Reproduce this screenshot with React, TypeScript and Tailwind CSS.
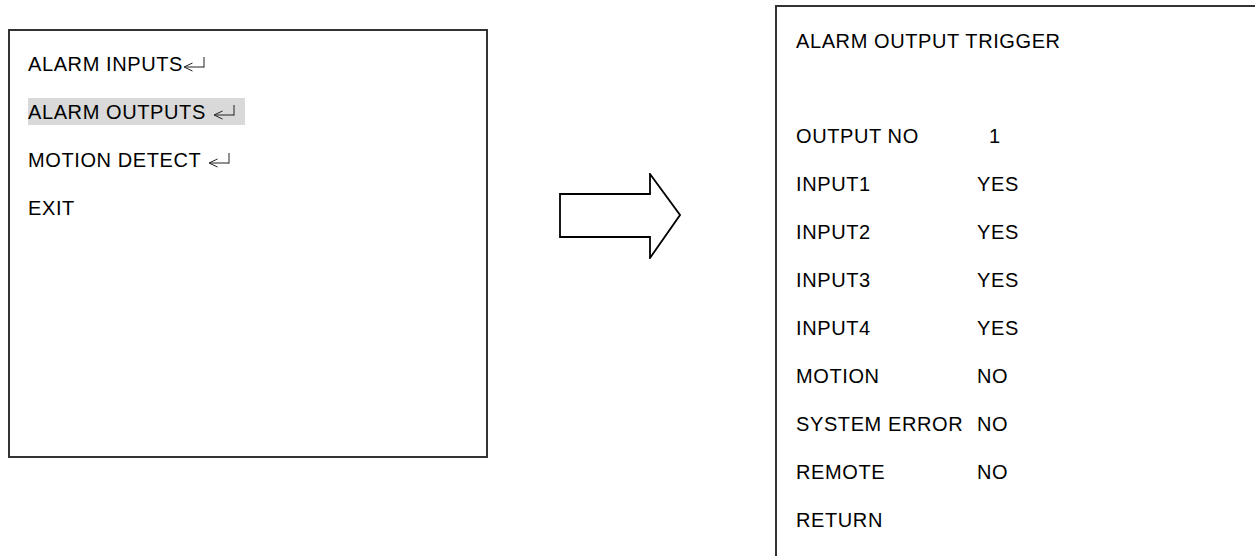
import React from "react";

const EnterMark = () => (
  <svg width="22" height="16" viewBox="0 0 22 16" className="shrink-0" fill="none" stroke="#222" strokeWidth="1">
    <polyline points="9.5,7 1,11 9.5,15" />
    <line x1="2" y1="11" x2="21" y2="11" />
    <line x1="21" y1="1" x2="21" y2="11.5" />
  </svg>
);

const menuItems = [
  { label: "ALARM INPUTS", mark: true, gap: false, active: false },
  { label: "ALARM OUTPUTS", mark: true, gap: true, active: true },
  { label: "MOTION DETECT", mark: true, gap: true, active: false },
  { label: "EXIT", mark: false, gap: false, active: false },
];

const triggerRows = [
  { label: "OUTPUT NO", value: "1" },
  { label: "INPUT1", value: "YES" },
  { label: "INPUT2", value: "YES" },
  { label: "INPUT3", value: "YES" },
  { label: "INPUT4", value: "YES" },
  { label: "MOTION", value: "NO" },
  { label: "SYSTEM ERROR", value: "NO" },
  { label: "REMOTE", value: "NO" },
  { label: "RETURN", value: "" },
];

const App = () => {
  return (
    <div
      className="w-[1255px] h-[556px] overflow-hidden bg-white flex items-start text-[20px] tracking-[0.6px] text-black"
      style={{ fontFamily: '"Liberation Sans", Arial, sans-serif' }}
    >
      {/* Main alarm menu */}
      <div className="ml-[8px] mt-[29px] w-[480px] h-[429px] shrink-0 border-2 border-[#333] pl-[18px] pt-[19px] flex flex-col gap-[21px]">
        {menuItems.map((item) => (
          <div key={item.label} className="flex">
            <div
              className={`h-[27px] flex items-center ${item.active ? "bg-[#d9d9d9] pr-[10px]" : ""}`}
            >
              <span>{item.label}</span>
              {item.mark && <span className={item.gap ? "ml-[7px]" : ""}><EnterMark /></span>}
            </div>
          </div>
        ))}
      </div>

      {/* Arrow */}
      <svg width="122" height="86" viewBox="0 0 122 86" className="ml-[71px] mt-[173px] shrink-0" fill="none">
        <polygon points="1,21 91,21 91,1 121,42 91,85 91,64 1,64" stroke="#000" strokeWidth="1.8" strokeLinejoin="miter" />
      </svg>

      {/* Alarm output trigger */}
      <div className="ml-[94px] mt-[5px] w-[520px] h-[620px] shrink-0 border-2 border-[#333] pl-[19px] pt-[20px]">
        <div className="h-[27px] flex items-center">ALARM OUTPUT TRIGGER</div>
        <div className="mt-[68px] flex flex-col gap-[21px]">
          {triggerRows.map((row) => (
            <div key={row.label} className="h-[27px] flex items-center">
              <span className="w-[181px] shrink-0">{row.label}</span>
              <span className={row.value === "1" ? "ml-[12px]" : ""}>{row.value}</span>
            </div>
          ))}
        </div>
      </div>
    </div>
  );
};

export default App;
